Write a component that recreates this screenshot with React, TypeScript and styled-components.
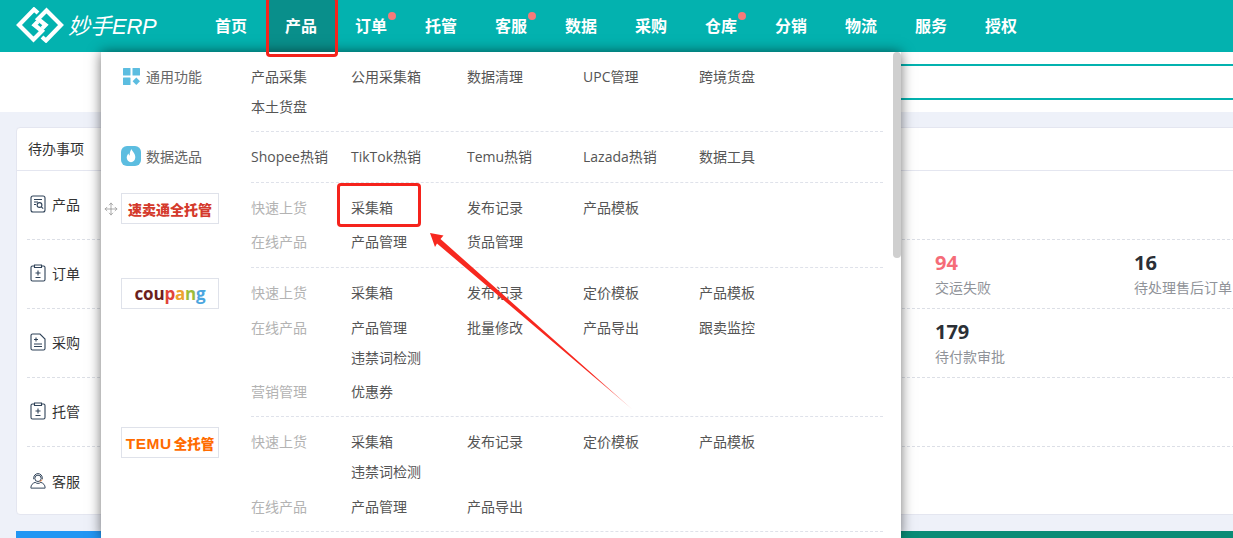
import React from 'react';
import styled, {createGlobalStyle} from "styled-components";
import {Move} from "lucide-react";

type MenuLine = { label?: string, items: string[] }
type StatType = { value: string, label: string, danger?: boolean }

const navItems = [
    {name: '首页'}, {name: '产品', active: true}, {name: '订单', dot: true}, {name: '托管'},
    {name: '客服', dot: true}, {name: '数据'}, {name: '采购'}, {name: '仓库', dot: true},
    {name: '分销'}, {name: '物流'}, {name: '服务'}, {name: '授权'},
]

const todoRows: { name: string, icon: React.ReactNode, stats: StatType[] }[] = [
    {name: '产品', icon: <ProductIcon/>, stats: []},
    {name: '订单', icon: <ClipIcon/>, stats: [{value: '94', label: '交运失败', danger: true}, {value: '16', label: '待处理售后订单'}]},
    {name: '采购', icon: <DocIcon/>, stats: [{value: '179', label: '待付款审批'}]},
    {name: '托管', icon: <ClipIcon/>, stats: []},
    {name: '客服', icon: <ServiceIcon/>, stats: []},
]

function ProductIcon() {
    return (
        <svg width="16" height="18" viewBox="0 0 16 18" fill="none" stroke="#2f4258" strokeWidth="1.1">
            <rect x="1" y="1" width="14" height="16" rx="2"/>
            <path d="M4 4.5h8M4 7h4M4 9.5h2"/>
            <circle cx="9.5" cy="10" r="2.4"/>
            <path d="M11.3 11.8l1.9 1.9"/>
        </svg>
    )
}

function ClipIcon() {
    return (
        <svg width="16" height="18" viewBox="0 0 16 18" fill="none" stroke="#2f4258" strokeWidth="1.1">
            <path d="M4.5 2H2.5A1.5 1.5 0 0 0 1 3.5v12A1.5 1.5 0 0 0 2.5 17h11a1.5 1.5 0 0 0 1.5-1.5v-12A1.5 1.5 0 0 0 13.500 2h-2"/>
            <path d="M4.500 1h7v2.500h-7z"/>
            <path d="M8 6.500v5M5.500 9h5M5.500 13.500h5"/>
        </svg>
    )
}

function DocIcon() {
    return (
        <svg width="16" height="18" viewBox="0 0 16 18" fill="none" stroke="#2f4258" strokeWidth="1.1">
            <path d="M2.500 1H10l5 5v9.500a1.500 1.500 0 0 1-1.500 1.500h-11A1.500 1.500 0 0 1 1 15.500v-13A1.500 1.500 0 0 1 2.500 1z"/>
            <path d="M6 4.500v4M4 6.500h4M4 11h8M4 13.500h8"/>
        </svg>
    )
}

function ServiceIcon() {
    return (
        <svg width="18" height="18" viewBox="0 0 18 18" fill="none" stroke="#2f4258" strokeWidth="1.1">
            <circle cx="9" cy="6" r="3.600"/>
            <path d="M4.200 7V5.500a4.800 4.800 0 0 1 9.600 0V7"/>
            <path d="M5.800 10.500C3 11.500 1 13.500 1 16.500V17h16v-.5c0-3-2-5-4.800-6-1 .8-2 1.200-3.200 1.200s-2.200-.4-3.200-1.200z"/>
            <path d="M13.800 7.500c-.3 1-1.500 1.700-3 1.700" stroke="#e8792f"/>
        </svg>
    )
}

const GeneralIcon = () => (
    <svg width="17" height="17" viewBox="0 0 17 17" fill="#5cbde0">
        <rect x="0" y="0" width="7.500" height="7.500" rx="0.500"/>
        <rect x="9.500" y="0" width="7.500" height="7.500" rx="0.500"/>
        <rect x="0" y="9.500" width="7.500" height="7.500" rx="0.500"/>
        <path d="M13.300 9.600l3.700 3.700-3.700 3.700-3.700-3.700z"/>
    </svg>
)

const FireIcon = () => (
    <svg width="20" height="20" viewBox="0 0 20 20">
        <rect width="20" height="20" rx="6" fill="#5cbde0"/>
        <path d="M10.500 3c.6 2.400 3.800 4.200 3.800 8.300 0 2.900-1.900 4.900-4.300 4.900s-4.300-1.900-4.300-4.600c0-1.900 1-3.100 1.800-4.200.2 1.100.6 1.700 1.200 2.100C8.500 7 9.300 4.800 10.500 3z" fill="#fff"/>
    </svg>
)

const LogoMark = () => (
    <svg width="48" height="36" viewBox="0 0 48 36" fill="none" stroke="#fff" strokeWidth="4.200">
        <path d="M22 6l-4-3.500L3 18l14.500 14.500L26 24l-7.500-6 3.500-3.500"/>
        <path d="M26 30l4 3.500L45 18 30.500 3.500 22 12l7.500 6-3.500 3.500"/>
    </svg>
)

const StatCell = (props: StatType) => (
    <Stat>
        <StatValue $danger={props.danger}>{props.value}</StatValue>
        <StatLabel>{props.label}</StatLabel>
    </Stat>
)

const MenuLines = (props: { lines: MenuLine[], gap?: number, bottom?: number, tight?: boolean }) => (
    <GroupBody $gap={props.gap ?? 5} $bottom={props.bottom ?? 10}>
        {props.lines.map((line, i) => (
            <SubRow key={i}>
                <SubLabel>{line.label}</SubLabel>
                <ItemGrid $tight={props.tight}>
                    {line.items.map(item => <MenuItem key={item}>{item}</MenuItem>)}
                </ItemGrid>
            </SubRow>
        ))}
    </GroupBody>
)

export default function App() {
    return (
        <Page>
            <GlobalStyle/>
            <Header>
                <Brand>
                    <LogoMark/>
                    <BrandName>妙手<em>ERP</em></BrandName>
                </Brand>
                <Nav>
                    {navItems.map(item => (
                        <NavItem key={item.name} $active={item.active}>
                            {item.name}
                            {item.dot && <NavDot/>}
                        </NavItem>
                    ))}
                </Nav>
            </Header>

            <SearchStrip>
                <SearchBox/>
            </SearchStrip>

            <Content>
                <TodoCard>
                    <TodoTitle>待办事项</TodoTitle>
                    {todoRows.map(row => (
                        <TodoRow key={row.name}>
                            <RowName>
                                <RowIcon>{row.icon}</RowIcon>
                                <span>{row.name}</span>
                            </RowName>
                            {row.stats.map(stat => <StatCell key={stat.label} {...stat}/>)}
                        </TodoRow>
                    ))}
                </TodoCard>
                <BottomBand>
                    <BlueBlock/>
                    <GreenBlock/>
                </BottomBand>
            </Content>

            <Dropdown>
                <Group>
                    <Side>
                        <SideTitle><SideIcon><GeneralIcon/></SideIcon>通用功能</SideTitle>
                    </Side>
                    <GroupBody $gap={0} $bottom={9}>
                        <PlainGrid>
                            {['产品采集', '公用采集箱', '数据清理', 'UPC管理', '跨境货盘', '本土货盘'].map(item => (
                                <MenuItem key={item}>{item}</MenuItem>
                            ))}
                        </PlainGrid>
                    </GroupBody>
                </Group>
                <Group>
                    <Side>
                        <SideTitle><SideIcon><FireIcon/></SideIcon>数据选品</SideTitle>
                    </Side>
                    <GroupBody $gap={0} $bottom={10}>
                        <PlainGrid>
                            {['Shopee热销', 'TikTok热销', 'Temu热销', 'Lazada热销', '数据工具'].map(item => (
                                <MenuItem key={item}>{item}</MenuItem>
                            ))}
                        </PlainGrid>
                    </GroupBody>
                </Group>
                <Group>
                    <Side>
                        <DragHandle><Move size={14} strokeWidth={1.2}/></DragHandle>
                        <BrandBox><AliText>速卖通全托管</AliText></BrandBox>
                    </Side>
                    <MenuLines gap={4} lines={[
                        {label: '快速上货', items: ['采集箱', '发布记录', '产品模板']},
                        {label: '在线产品', items: ['产品管理', '货品管理']},
                    ]}/>
                </Group>
                <Group>
                    <Side>
                        <BrandBox>
                            <CoupangText>
                                <span>cou</span><i style={{color: '#e0453a'}}>p</i><i style={{color: '#eda22f'}}>a</i><i style={{color: '#9cbc3a'}}>n</i><i style={{color: '#4ba6df'}}>g</i>
                            </CoupangText>
                        </BrandBox>
                    </Side>
                    <MenuLines tight bottom={9} lines={[
                        {label: '快速上货', items: ['采集箱', '发布记录', '定价模板', '产品模板']},
                        {label: '在线产品', items: ['产品管理', '批量修改', '产品导出', '跟卖监控', '违禁词检测']},
                        {label: '营销管理', items: ['优惠券']},
                    ]}/>
                </Group>
                <Group>
                    <Side>
                        <BrandBox><TemuText>TEMU<b>全托管</b></TemuText></BrandBox>
                    </Side>
                    <MenuLines bottom={9} lines={[
                        {label: '快速上货', items: ['采集箱', '发布记录', '定价模板', '产品模板', '违禁词检测']},
                        {label: '在线产品', items: ['产品管理', '产品导出']},
                    ]}/>
                </Group>
                <ScrollThumb/>
            </Dropdown>

            <NavMark/>
            <ItemMark/>
            <ArrowMark width="220" height="190" viewBox="0 0 220 190">
                <defs>
                    <linearGradient id="arrowFade" x1="0" y1="0" x2="1" y2="1">
                        <stop offset="0.8" stopColor="#f7281f"/>
                        <stop offset="1" stopColor="#f7281f" stopOpacity="0.35"/>
                    </linearGradient>
                </defs>
                <path d="M10 8L23.500 10.500 20.500 14 213 185 17 18.500 15 22z" fill="url(#arrowFade)"/>
            </ArrowMark>
        </Page>
    );
}

const GlobalStyle = createGlobalStyle`
    html, body {
        margin: 0;
        padding: 0;
        background: #fff;
    }
    body {
        font-family: "Open Sans", "Noto Sans CJK SC", sans-serif;
        font-size: 14px;
    }
`

const Page = styled.div`
    position: relative;
    width: 1233px;
    height: 538px;
    overflow: hidden;
    background: #fff;
`
const Header = styled.div`
    display: flex;
    height: 52px;
    background: #03b2af;
    color: #fff;
`
const Brand = styled.div`
    width: 196px;
    padding: 7px 0 0 16px;
    box-sizing: border-box;
    display: flex;
    align-items: flex-start;
    gap: 4px;
`
const BrandName = styled.div`
    font-size: 22px;
    line-height: 36px;
    font-style: italic;
    white-space: nowrap;
    em {
        font-family: "Liberation Sans", sans-serif;
        font-size: 22px;
        letter-spacing: -0.3px;
    }
`
const Nav = styled.div`
    display: flex;
`
const NavItem = styled.div<{ $active?: boolean }>`
    position: relative;
    width: 70px;
    line-height: 52px;
    text-align: center;
    font-size: 16px;
    font-weight: 700;
    background: ${props => props.$active ? '#098f8b' : 'transparent'};
`
const NavDot = styled.span`
    position: absolute;
    top: 12px;
    left: 52px;
    width: 8px;
    height: 8px;
    border-radius: 50%;
    background: #f57a7a;
`
const SearchStrip = styled.div`
    height: 60px;
    padding: 12px 0 0 300px;
    box-sizing: border-box;
`
const SearchBox = styled.div`
    height: 32px;
    border-top: 2px solid #03b2af;
    border-bottom: 2px solid #03b2af;
`
const Content = styled.div`
    height: 426px;
    padding: 15px 0 0 16px;
    box-sizing: border-box;
    background: #eef1f9;
`
const TodoCard = styled.div`
    width: 1300px;
    height: 388px;
    box-sizing: border-box;
    background: #fff;
    border-radius: 4px;
    border: 1px solid #e4e6f0;
`
const TodoTitle = styled.div`
    height: 42px;
    line-height: 42px;
    padding-left: 11px;
    color: #333;
    border-bottom: 1px solid #e4e6f0;
`
const TodoRow = styled.div`
    display: flex;
    align-items: center;
    height: 69px;
    box-sizing: border-box;
    margin-left: 10px;
    border-bottom: 1px dashed #dcdfe6;
    &:last-child {
        border-bottom: 0;
    }
`
const RowName = styled.div`
    flex: 0 0 908px;
    display: flex;
    align-items: center;
    gap: 6px;
    padding: 0 0 2px 3px;
    box-sizing: border-box;
    color: #333;
`
const RowIcon = styled.div`
    flex: none;
    width: 16px;
    display: flex;
    justify-content: center;
`
const Stat = styled.div`
    flex: 0 0 199px;
    white-space: nowrap;
`
const StatValue = styled.div<{ $danger?: boolean }>`
    font-size: 20px;
    font-weight: 700;
    line-height: 28px;
    color: ${props => props.$danger ? '#f56c78' : '#2b2f36'};
`
const StatLabel = styled.div`
    line-height: 22px;
    color: #909399;
`
const BottomBand = styled.div`
    display: flex;
    height: 7px;
    margin-top: 16px;
`
const BlueBlock = styled.div`
    flex: 1;
    background: #2196f3;
`
const GreenBlock = styled.div`
    flex: 1;
    background: #098c76;
`
const Dropdown = styled.div`
    position: absolute;
    top: 52px;
    left: 101px;
    width: 800px;
    height: 486px;
    overflow: hidden;
    background: #fff;
    z-index: 2;
    box-shadow: 0 0 12px rgba(0, 0, 0, 0.55);
`
const ScrollThumb = styled.div`
    position: absolute;
    top: 0;
    right: 0;
    width: 8px;
    height: 206px;
    border-radius: 4px;
    background: #cfcfcf;
`
const Group = styled.div`
    display: flex;
`
const Side = styled.div`
    position: relative;
    flex: 0 0 150px;
    padding: 10px 0 0 20px;
    box-sizing: border-box;
`
const SideTitle = styled.div`
    display: flex;
    align-items: center;
    height: 28px;
    color: #666;
`
const SideIcon = styled.div`
    flex: none;
    width: 20px;
    margin-right: 5px;
    display: flex;
    justify-content: center;
`
const DragHandle = styled.div`
    position: absolute;
    top: 18px;
    left: 3px;
    color: #888;
`
const BrandBox = styled.div`
    width: 98px;
    height: 31px;
    box-sizing: border-box;
    border: 1px solid #dfe2ea;
    display: flex;
    align-items: center;
    justify-content: center;
    overflow: hidden;
`
const AliText = styled.span`
    font-family: "Noto Sans CJK SC", sans-serif;
    font-size: 14px;
    font-weight: 900;
    color: #d43a2c;
    white-space: nowrap;
`
const CoupangText = styled.span`
    font-family: "Open Sans", sans-serif;
    font-size: 17px;
    font-weight: 700;
    letter-spacing: -0.2px;
    color: #6a1f1d;
    i {
        font-style: normal;
    }
`
const TemuText = styled.span`
    font-family: "Liberation Sans", sans-serif;
    font-size: 15.500px;
    font-weight: 700;
    letter-spacing: 0.5px;
    color: #ff6b00;
    white-space: nowrap;
    b {
        font-family: "Noto Sans CJK SC", sans-serif;
        font-size: 13.500px;
        font-weight: 900;
        letter-spacing: 0;
        margin-left: 2px;
    }
`
const GroupBody = styled.div<{ $gap: number, $bottom: number }>`
    flex: 0 0 632px;
    display: flex;
    flex-direction: column;
    gap: ${props => props.$gap}px;
    padding: 10px 0 ${props => props.$bottom}px;
    border-bottom: 1px dashed #dfe2ea;
`
const SubRow = styled.div`
    display: flex;
`
const SubLabel = styled.div`
    flex: 0 0 100px;
    line-height: 30px;
    color: #b3b3b3;
`
const ItemGrid = styled.div<{ $tight?: boolean }>`
    display: grid;
    grid-template-columns: repeat(4, 116px);
    grid-template-rows: 30px;
    grid-auto-rows: ${props => props.$tight ? '29px' : '30px'};
`
const PlainGrid = styled.div`
    display: grid;
    grid-template-columns: 100px repeat(4, 116px);
`
const MenuItem = styled.div`
    align-self: center;
    line-height: 30px;
    color: #555;
    white-space: nowrap;
`
const NavMark = styled.div`
    position: absolute;
    top: -3px;
    left: 266px;
    width: 72px;
    height: 60px;
    box-sizing: border-box;
    border: 3px solid #f5231c;
    border-radius: 4px;
    z-index: 3;
`
const ItemMark = styled.div`
    position: absolute;
    top: 183px;
    left: 337px;
    width: 84px;
    height: 44px;
    box-sizing: border-box;
    border: 3px solid #f5231c;
    border-radius: 4px;
    z-index: 3;
`
const ArrowMark = styled.svg`
    position: absolute;
    top: 225px;
    left: 420px;
    z-index: 3;
`
